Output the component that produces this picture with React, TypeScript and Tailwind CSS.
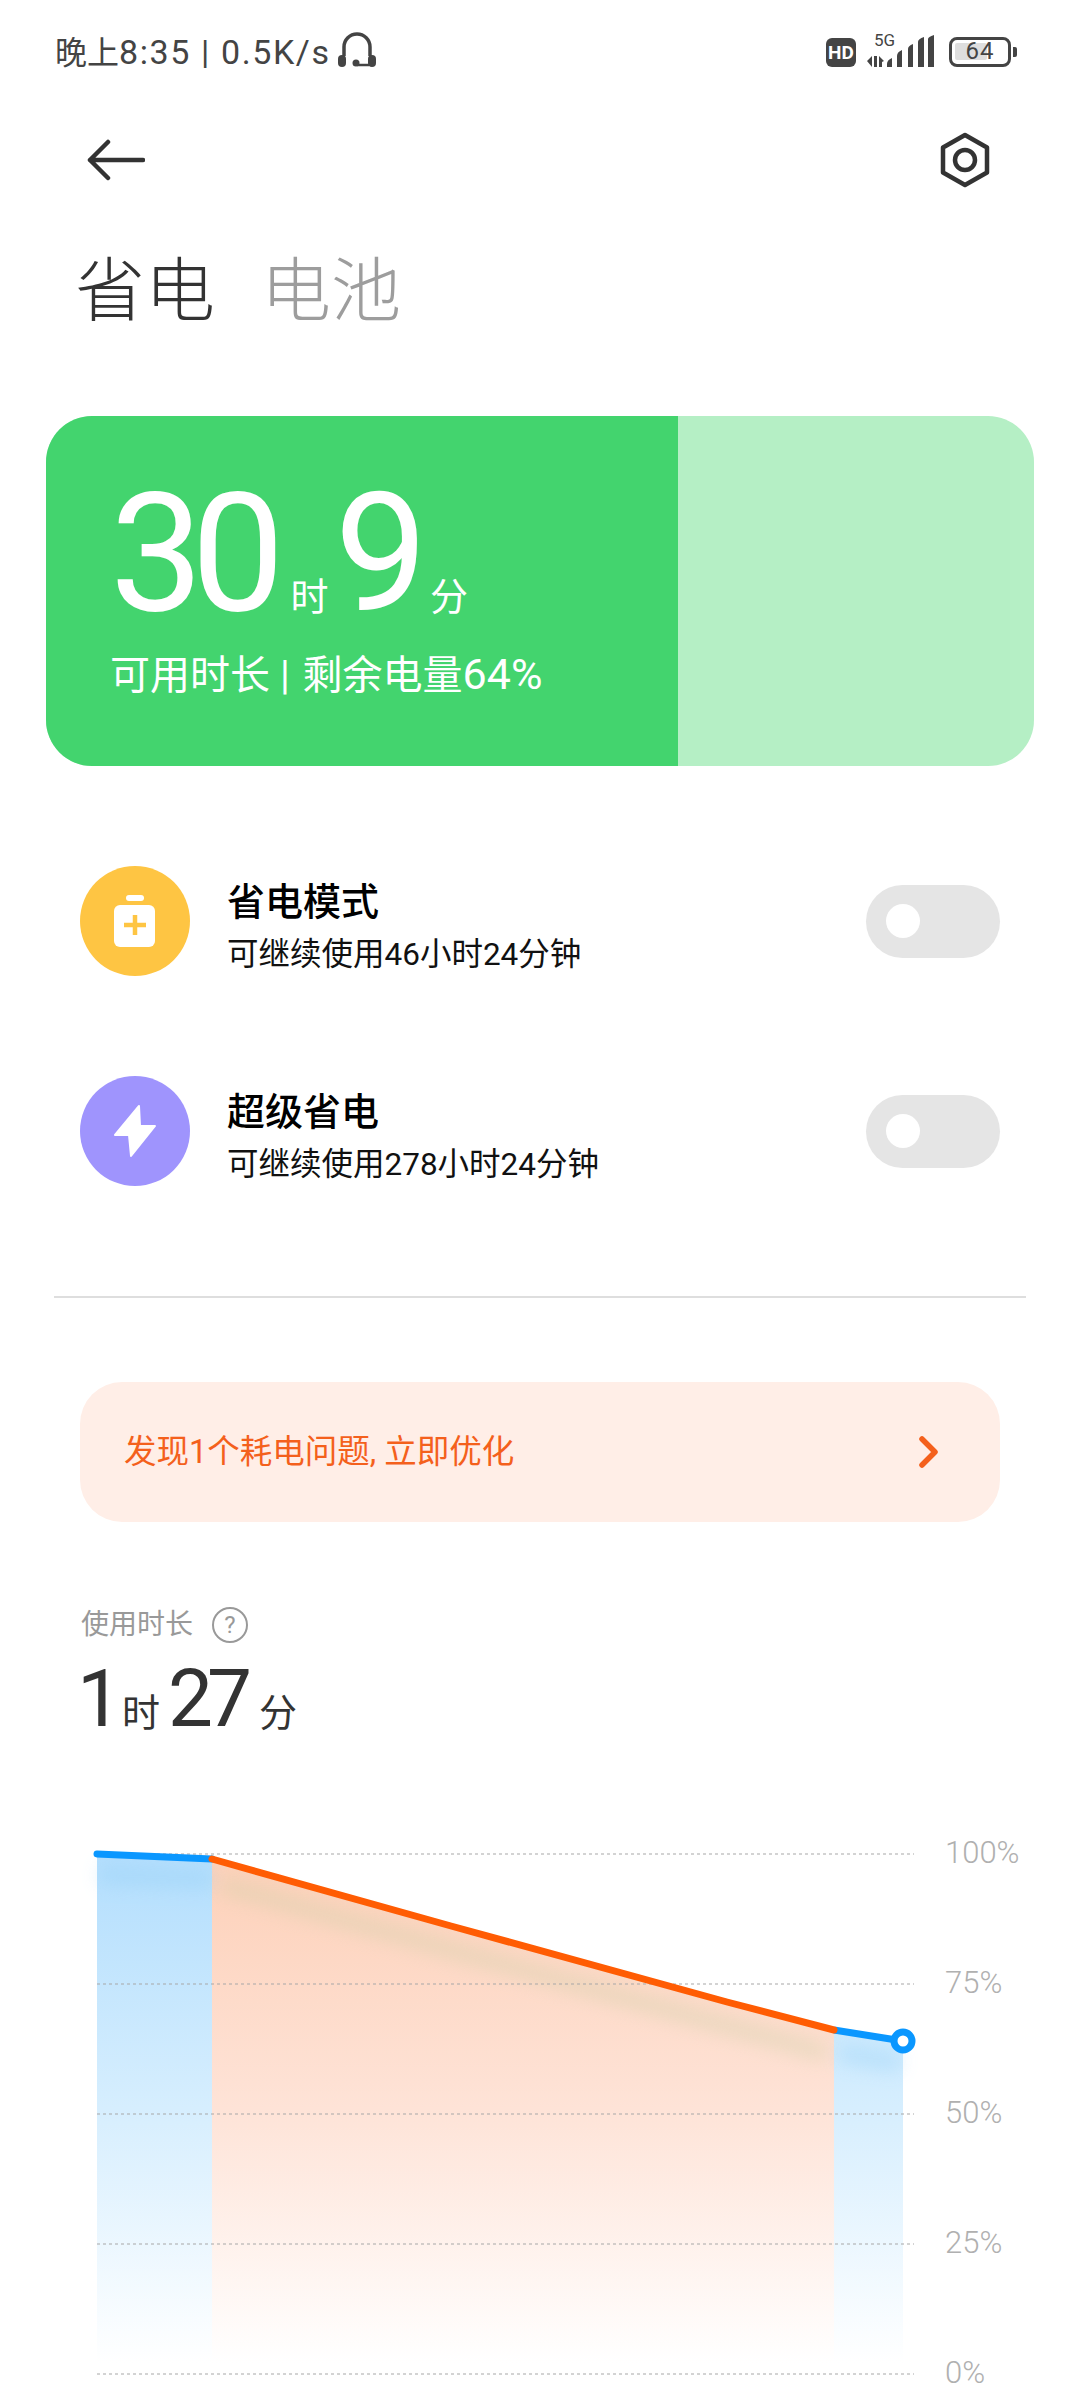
const cjk = "font-['Roboto','Noto_Sans_CJK_SC',sans-serif]";

function Headset() {
  return (
    <svg width="40" height="36" viewBox="0 0 40 36" fill="none">
      <path d="M7 24V15a13 13 0 0 1 26 0v9" stroke="#444" strokeWidth="3.5" />
      <rect x="1" y="23" width="8" height="12" rx="4" fill="#444" />
      <rect x="31" y="23" width="8" height="12" rx="4" fill="#444" />
      <circle cx="19" cy="31" r="3.5" fill="#444" />
      <path d="M20 33h12" stroke="#444" strokeWidth="2.5" />
    </svg>
  );
}

function Signal() {
  return (
    <div className="relative h-[34px] w-[68px]">
      <span className="absolute left-[7px] top-[-3px] text-[17px] leading-[16px] text-[#444]">5G</span>
      <svg className="absolute left-0 top-0" width="68" height="34" viewBox="0 0 68 34" fill="#444">
        <path d="M0 26l5-5v11zM7 21h3v11H7zM12 21l5 5-2 1v5h-3z" />
        <path d="M20 32v-3q0-4 5-6v9zM30 32V21q0-4 5-6v17zM41 32V14q0-3 5-5v23zM51 32V7q0-3 6-5v30z" />
        <path d="M61 32V4q0-2 6-4v32z" />
      </svg>
    </div>
  );
}

function Battery() {
  return (
    <div className="flex items-center gap-[2px]">
      <div className="relative h-[30px] w-[62px] rounded-[8px] border-[3.5px] border-[#444]">
        <div className="absolute left-[3px] top-[3px] h-[17px] w-[32px] rounded-[2px] bg-[#dedede]" />
        <span className="absolute inset-0 text-center text-[24px] leading-[23px] tracking-[1px] text-[#444]">64</span>
      </div>
      <div className="h-[10px] w-[4px] rounded-r-[2px] bg-[#444]" />
    </div>
  );
}

function StatusBar() {
  return (
    <div className="flex h-[72px] items-end justify-between pl-[55px] pr-[63px] pb-[3px] text-[#444]">
      <div className="flex items-end gap-[6px]">
        <span className="-mb-[3px] text-[32px] leading-[38px]">
          晚上<span className="text-[34px] tracking-[1.6px]">8:35 | 0.5K/s</span>
        </span>
        <div className="mb-[1px]"><Headset /></div>
      </div>
      <div className="flex items-center">
        <div className="flex h-[29px] w-[30px] items-center justify-center rounded-[6px] bg-[#444] text-[19px] leading-none font-bold text-white">HD</div>
        <div className="ml-[11px]"><Signal /></div>
        <div className="ml-[14px]"><Battery /></div>
      </div>
    </div>
  );
}

function NavBar() {
  return (
    <div className="mt-[58px] flex h-[60px] items-center justify-between pl-[87px] pr-[89px]">
      <svg width="58" height="42" viewBox="0 0 58 42" fill="none" stroke="#333" strokeWidth="4.5" strokeLinecap="round" strokeLinejoin="round">
        <path d="M56 21H3M21 3L3 21l18 18" />
      </svg>
      <svg width="52" height="56" viewBox="0 0 52 56" fill="none" stroke="#333">
        <path d="M26 3l22 12.5v25L26 53 4 40.5v-25z" strokeWidth="4.5" strokeLinejoin="round" />
        <circle cx="26" cy="28" r="10" strokeWidth="4.5" />
      </svg>
    </div>
  );
}

function Tabs() {
  return (
    <div className="mt-[62px] flex h-[80px] items-center gap-[46px] pl-[75px] text-[70px] leading-[80px] font-light">
      <span className="text-[#333]">省电</span>
      <span className="text-[#9d9d9d]">电池</span>
    </div>
  );
}

function SummaryCard() {
  return (
    <div className="mx-[46px] mt-[84px] flex h-[350px] overflow-hidden rounded-[46px] bg-[#b5efc5]">
      <div className="h-full w-[632px] bg-[#43d46e] pl-[64px] pt-[48px] text-white">
        <div className="flex h-[180px] items-baseline">
          <span className="text-[166px] leading-[180px] tracking-[-12px]">30</span>
          <span className="ml-[18px] text-[38px] leading-none">时</span>
          <span className="ml-[6px] text-[166px] leading-[180px]">9</span>
          <span className="ml-[2px] text-[38px] leading-none">分</span>
        </div>
        <div className="mt-[8px] text-[40px] leading-[44px]">
          可用时长 |<span className="ml-[3px]"> 剩余电量</span><span className="text-[43px]">64%</span>
        </div>
      </div>
    </div>
  );
}

function ModeRow({ title, sub, icon, color }: { title: string; sub: string; icon: React.ReactNode; color: string }) {
  return (
    <div className="flex h-[110px] items-center pl-[80px] pr-[80px]">
      <div className={`h-[110px] w-[110px] shrink-0 rounded-full ${color}`}>{icon}</div>
      <div className="ml-[37px] flex-1 pt-[10px]">
        <div className="text-[38px] leading-[50px] font-medium text-black">{title}</div>
        <div className="mt-[8px] text-[31.5px] leading-[40px] text-[#111]">{sub}</div>
      </div>
      <div className="flex h-[73px] w-[134px] items-center rounded-full bg-[#e5e5e5] pl-[20px]">
        <div className="h-[34px] w-[34px] rounded-full bg-white" />
      </div>
    </div>
  );
}

function Modes() {
  return (
    <div className="mt-[100px] flex flex-col gap-[100px]">
      <ModeRow
        title="省电模式"
        sub="可继续使用46小时24分钟"
        color="bg-[#fec543]"
        icon={
          <svg width="110" height="110" viewBox="0 0 110 110">
            <rect x="46" y="29" width="18" height="6" rx="3" fill="#fff" />
            <rect x="34" y="39" width="41" height="42" rx="6" fill="#fff" />
            <path d="M44 59h22M55 49v20" stroke="#fec543" strokeWidth="4.5" />
          </svg>
        }
      />
      <ModeRow
        title="超级省电"
        sub="可继续使用278小时24分钟"
        color="bg-[#9f94fd]"
        icon={
          <svg width="110" height="110" viewBox="0 0 110 110">
            <path d="M59 30L35 59h14l2 21 24-30H60z" fill="#fff" stroke="#fff" strokeWidth="2" strokeLinejoin="round" />
          </svg>
        }
      />
    </div>
  );
}

function Banner() {
  return (
    <div className="mx-[80px] mt-[84px] flex h-[140px] items-center justify-between rounded-[42px] bg-[#ffeee7] pl-[44px] pr-[60px]">
      <span className="text-[32.5px] leading-[40px] text-[#f4601c]">发现1个耗电问题, 立即优化</span>
      <svg width="22" height="34" viewBox="0 0 22 34" fill="none" stroke="#f4601c" strokeWidth="5.5" strokeLinecap="round" strokeLinejoin="round">
        <path d="M4 4l13 13L4 30" />
      </svg>
    </div>
  );
}

function UsageTime() {
  return (
    <div className="mt-[83px] pl-[81px]">
      <div className="flex h-[40px] items-center gap-[19px] text-[#999]">
        <span className="text-[28px] leading-[40px]">使用时长</span>
        <div className="flex h-[36px] w-[36px] items-center justify-center rounded-full border-[2.5px] border-[#999] text-[24px] leading-none">?</div>
      </div>
      <div className="mt-[10px] -ml-[4px] flex h-[88px] items-baseline text-[#333]">
        <span className="text-[80px] leading-[88px]">1</span>
        <span className="ml-[0px] text-[38px] leading-none">时</span>
        <span className="ml-[8px] text-[80px] leading-[88px] tracking-[-6px]">27</span>
        <span className="ml-[13px] text-[38px] leading-none">分</span>
      </div>
    </div>
  );
}

const grid = [1853, 1983, 2113, 2243, 2373];
const labels = ['100%', '75%', '50%', '25%', '0%'];

function Chart() {
  return (
    <div className="mt-[88px] flex pl-[97px]">
      <svg width="830" height="560" viewBox="97 1830 830 560" className="shrink-0 overflow-visible">
        <defs>
          <linearGradient id="blueFill" gradientUnits="userSpaceOnUse" x1="0" y1="1853" x2="0" y2="2362">
            <stop offset="0" stopColor="#b3defd" />
            <stop offset="0.5" stopColor="#d6eefe" />
            <stop offset="1" stopColor="#ffffff" />
          </linearGradient>
          <linearGradient id="orangeFill" gradientUnits="userSpaceOnUse" x1="0" y1="1853" x2="0" y2="2362">
            <stop offset="0" stopColor="#fdd0b8" />
            <stop offset="0.5" stopColor="#fee3d7" />
            <stop offset="1" stopColor="#ffffff" />
          </linearGradient>
          <filter id="soft" filterUnits="userSpaceOnUse" x="60" y="1800" width="900" height="400">
            <feGaussianBlur stdDeviation="9" />
          </filter>
        </defs>
        <path d="M97 1853L212 1858V2362H97z" fill="url(#blueFill)" />
        <path d="M212 1858L451 1925L727 2001L834 2029V2362H212z" fill="url(#orangeFill)" />
        <path d="M834 2029L903 2040V2362H834z" fill="url(#blueFill)" />
        <path d="M100 1874L212 1879" stroke="#8fcdf5" strokeWidth="18" opacity="0.35" filter="url(#soft)" fill="none" />
        <path d="M222 1884L451 1949L727 2025L826 2052" stroke="#c9cfa6" strokeWidth="18" opacity="0.35" filter="url(#soft)" fill="none" />
        <path d="M840 2052L900 2062" stroke="#8fcdf5" strokeWidth="18" opacity="0.35" filter="url(#soft)" fill="none" />
        {grid.map((y) => (
          <line key={y} x1="97" y1={y} x2="914" y2={y} stroke="#a8a8a8" strokeWidth="1.2" strokeDasharray="3 3" />
        ))}
        <path d="M97 1853L212 1858" stroke="#0a97ff" strokeWidth="7" strokeLinecap="round" fill="none" />
        <path d="M834 2029L903 2040" stroke="#0a97ff" strokeWidth="7" fill="none" />
        <path d="M212 1858L451 1925L727 2001L834 2029" stroke="#ff5c03" strokeWidth="7" strokeLinecap="round" strokeLinejoin="round" fill="none" />
        <circle cx="903" cy="2040" r="9" fill="#fff" stroke="#0a97ff" strokeWidth="7" />
      </svg>
      <div className="ml-[18px] flex flex-col gap-[86px]">
        {labels.map((l) => (
          <span key={l} className="h-[44px] text-[31px] leading-[44px] font-light text-[#b0b0b0]">{l}</span>
        ))}
      </div>
    </div>
  );
}

export default function App() {
  return (
    <div className={`h-[2400px] w-[1080px] overflow-hidden bg-white ${cjk}`}>
      <StatusBar />
      <NavBar />
      <Tabs />
      <SummaryCard />
      <Modes />
      <div className="mx-[54px] mt-[110px] h-[2px] bg-[#dedede]" />
      <Banner />
      <UsageTime />
      <Chart />
    </div>
  );
}
